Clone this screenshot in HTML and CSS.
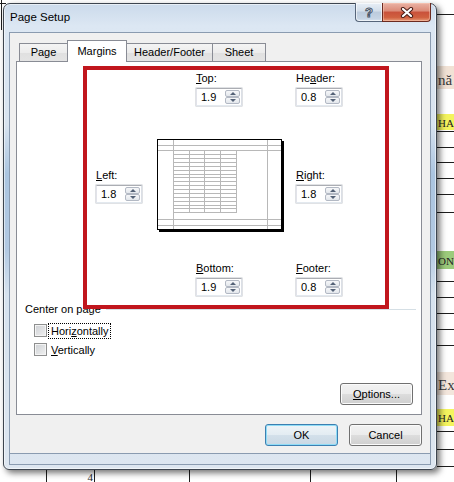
FILE: index.html
```html
<!DOCTYPE html>
<html lang="en">
<head>
  <meta charset="UTF-8" />
  <title>Page Setup</title>
  <link rel="stylesheet" href="styles.css">
</head>
<body>

<!-- worksheet behind the dialog -->
<svg class="sheet" width="454" height="482" viewBox="0 0 454 482">
  <rect x="437" y="66" width="17" height="23" fill="#f1e2d5"/>
  <rect x="437" y="114" width="17" height="16" fill="#f4f45e"/>
  <rect x="437" y="251" width="17" height="18" fill="#9ccb7c"/>
  <rect x="437" y="372" width="17" height="23" fill="#f3e6dc"/>
  <rect x="437" y="409" width="17" height="17" fill="#f4f45e"/>
  <g stroke="#1e1e1e" stroke-width="1" fill="none">
    <path d="M0 3.5H6 M1.5 0V30 M437 14.5H454"/>
    <path d="M437 131.5H454 M437 147.5H454 M437 162.5H454 M437 178.5H454 M437 194.5H454 M437 212.5H454"/>
    <path d="M437 281.5H454 M437 297.5H454 M437 313.5H454 M437 329.5H454 M437 345.5H454"/>
    <path d="M437 431.5H454 M437 449.5H454 M437 466.5H454"/>
    <path d="M46.5 466V482 M94.5 466V482 M189.5 466V482 M310.5 466V482 M396.5 466V482"/>
  </g>
  <text class="cell big" x="438" y="85">nă</text>
  <text class="cell" x="438" y="127">HA</text>
  <text class="cell" x="438" y="265">ON</text>
  <text class="cell big" x="438" y="390">Ex</text>
  <text class="cell" x="438" y="422">HA</text>
  <text class="cell" x="93" y="481" text-anchor="end">4</text>
</svg>

<div class="window">
  <div class="titlebar">
    <span class="title">Page Setup</span>
    <div class="caption-btns">
      <div class="cap-btn help">?</div>
      <div class="cap-btn close">
        <svg width="14" height="11" viewBox="0 0 14 11">
          <path d="M3 2L11 9M11 2L3 9" stroke="#4a1d16" stroke-width="4.2" stroke-linecap="round"/>
          <path d="M3 2L11 9M11 2L3 9" stroke="#fff" stroke-width="2.2" stroke-linecap="round"/>
        </svg>
      </div>
    </div>
  </div>

  <div class="client">
    <div class="tabs">
      <div class="tab tab-page">Page</div>
      <div class="tab tab-margins selected">Margins</div>
      <div class="tab tab-hf">Header/Footer</div>
      <div class="tab tab-sheet">Sheet</div>
    </div>

    <div class="panel">
      <div class="margins">
        <div class="field f-top">
          <label><u>T</u>op:</label>
          <div class="spin-box"><span class="value">1.9</span><span class="spinner"><i class="up"></i><i class="down"></i></span></div>
        </div>
        <div class="field f-header">
          <label>He<u>a</u>der:</label>
          <div class="spin-box"><span class="value">0.8</span><span class="spinner"><i class="up"></i><i class="down"></i></span></div>
        </div>
        <div class="field f-left">
          <label><u>L</u>eft:</label>
          <div class="spin-box"><span class="value">1.8</span><span class="spinner"><i class="up"></i><i class="down"></i></span></div>
        </div>

        <svg class="preview" width="127" height="93" viewBox="0 0 127 93">
          <rect x="2" y="2" width="125" height="91" fill="#000"/>
          <rect x="0.5" y="0.5" width="124" height="90" fill="#fff" stroke="#000"/>
          <g stroke="#b8b8b8" stroke-width="1" fill="none">
            <path d="M1 6.5H124M1 11.5H124M1 80.5H124M1 86.5H124M16.5 1V90M110.5 1V90"/>
            <path d="M32.5 11V74M47.5 11V74M63.5 11V74M79.5 11V74"/>
            <path d="M16 15.5H80M16 19.5H80M16 23.5H80M16 27.5H80M16 31.5H80M16 35.5H80M16 38.5H80M16 42.5H80M16 46.5H80M16 50.5H80M16 54.5H80M16 58.5H80M16 62.5H80M16 66.5H80M16 69.5H80M16 73.5H80"/>
          </g>
        </svg>

        <div class="field f-right">
          <label><u>R</u>ight:</label>
          <div class="spin-box"><span class="value">1.8</span><span class="spinner"><i class="up"></i><i class="down"></i></span></div>
        </div>
        <div class="field f-bottom">
          <label><u>B</u>ottom:</label>
          <div class="spin-box"><span class="value">1.9</span><span class="spinner"><i class="up"></i><i class="down"></i></span></div>
        </div>
        <div class="field f-footer">
          <label><u>F</u>ooter:</label>
          <div class="spin-box"><span class="value">0.8</span><span class="spinner"><i class="up"></i><i class="down"></i></span></div>
        </div>
      </div>

      <div class="center-group">
        <div class="group-title">Center on page</div>
        <div class="check first"><span class="box"></span><span class="text focus">Hori<u>z</u>ontally</span></div>
        <div class="check"><span class="box"></span><span class="text"><u>V</u>ertically</span></div>
      </div>

      <div class="panel-footer">
        <button class="btn"><u>O</u>ptions...</button>
      </div>

      <!-- red annotation drawn over the dialog -->
      <div class="mark"></div>
    </div>

    <div class="dialog-buttons">
      <button class="btn default">OK</button>
      <button class="btn">Cancel</button>
    </div>
  </div>

  <div class="frame-bottom"></div>
</div>

</body>
</html>
```

FILE: styles.css
```css
/* Reset and base styles */
* {
  box-sizing: border-box;
  margin: 0;
  padding: 0;
}

body {
  position: relative;
  width: 454px;
  height: 482px;
  overflow: hidden;
  background: #fff;
  font-family: "Liberation Sans", Arial, sans-serif;
  font-size: 11px;
  color: #000;
}

u {
  text-decoration: underline;
  text-underline-offset: 1px;
}

/* Worksheet in the background */
.sheet {
  position: absolute;
  left: 0;
  top: 0;
}

.sheet .cell {
  font-family: "Liberation Serif", "Times New Roman", serif;
  font-size: 11px;
  fill: #222;
}

.sheet .big {
  font-size: 15px;
  fill: #3a3a3a;
}

/* Window frame */
.window {
  position: absolute;
  left: 3px;
  top: 3px;
  width: 434px;
  height: 467px;
  display: flex;
  flex-direction: column;
  padding: 0 5px 4px;
  border: 1px solid #3d454f;
  border-radius: 7px 7px 6px 6px;
  background: linear-gradient(to bottom,
    #cbdaeb 0, #dce7f3 22px, #d8e3ef 120px, #abc5e0 170px,
    #b2c9e2 245px, #d6e2ee 290px, #dde6f0 100%);
  box-shadow: inset 0 0 0 1px rgba(255,255,255,0.55), 3px 3px 6px rgba(0,0,0,0.55);
}

.titlebar {
  height: 28px;
  display: flex;
  align-items: flex-start;
}

.title {
  padding: 6px 0 0 1px;
  font-size: 11.5px;
  line-height: 14px;
  color: #000;
}

.caption-btns {
  display: flex;
  margin-left: auto;
  margin-top: -1px;
}

.cap-btn {
  height: 19px;
  display: flex;
  align-items: center;
  justify-content: center;
  border: 1px solid #56657a;
  border-top: none;
}

.help {
  width: 27px;
  border-right: none;
  border-radius: 0 0 0 4px;
  background: linear-gradient(to bottom, #e7eef6, #d3deea 45%, #bccbdc 50%, #c6d4e4 85%, #d8e3ef);
  box-shadow: inset 0 0 0 1px rgba(255,255,255,0.6);
  font-weight: bold;
  font-size: 13px;
  color: #fff;
  -webkit-text-stroke: 1px #4a5668;
}

.close {
  width: 49px;
  border-color: #6b2a20;
  border-radius: 0 0 4px 0;
  background: linear-gradient(to bottom, #eab3a5, #db8a77 45%, #c9513b 50%, #d0603f 80%, #e79a78);
  box-shadow: inset 0 0 0 1px rgba(255,210,190,0.45);
}

/* Client area */
.client {
  height: 422px;
  display: flex;
  flex-direction: column;
  padding: 7px 8px 0 6px;
  background: #f0f0f0;
  border: 1px solid #8a9bb0;
}

.frame-bottom {
  height: 11px;
  border: 1px solid #8a9bb0;
  border-top: none;
}

/* Tabs */
.tabs {
  position: relative;
  z-index: 2;
  height: 21px;
  display: flex;
  align-items: flex-end;
  padding-left: 3px;
}

.tab {
  height: 18px;
  border: 1px solid #898c95;
  border-bottom: none;
  background: linear-gradient(to bottom, #f4f4f4, #ececec 50%, #e0e0e0 51%, #e4e4e4);
  text-align: center;
  line-height: 16px;
}

.tab-page { width: 49px; }
.tab-margins { width: 60px; margin-left: -1px; }
.tab-hf { width: 87px; margin-left: -1px; }
.tab-sheet { width: 54px; margin-left: -1px; }

.tab.selected {
  position: relative;
  z-index: 1;
  height: 22px;
  margin-bottom: -1px;
  padding-top: 2px;
  background: #fff;
}

.panel {
  position: relative;
  height: 354px;
  display: flex;
  flex-direction: column;
  background: #fff;
  border: 1px solid #898c95;
}

/* Margin fields */
.margins {
  display: grid;
  grid-template-columns: 61px 127px 58px;
  grid-template-rows: 35px 33px 93px 29px 35px;
  margin: 9px 0 0 79px;
}

.f-top { grid-area: 1 / 2; margin-left: 39px; }
.f-header { grid-area: 1 / 3; justify-self: end; }
.f-left { grid-area: 3 / 1; align-self: center; }
.preview { grid-area: 3 / 2; }
.f-right { grid-area: 3 / 3; justify-self: end; align-self: center; }
.f-bottom { grid-area: 5 / 2; margin-left: 39px; }
.f-footer { grid-area: 5 / 3; justify-self: end; }

.field label {
  display: block;
  line-height: 14px;
  margin-bottom: 3px;
}

.spin-box {
  width: 46px;
  height: 18px;
  display: flex;
  background: #fff;
  border: 1px solid #abadb3;
  border-color: #abadb3 #dbdfe6 #e3e9ef #e2e3ea;
  box-shadow: 0 0 0 0.5px #c2c5cb;
}

.spin-box .value {
  flex: 1;
  padding-left: 4px;
  line-height: 16px;
}

.spinner {
  width: 15px;
  display: flex;
  flex-direction: column;
  margin: 1px 1px 1px 0;
}

.spinner i {
  flex: 1;
  display: flex;
  align-items: center;
  justify-content: center;
  border: 1px solid #b3b9c4;
  border-radius: 2px;
  background: linear-gradient(to bottom, #f6f7f9, #e3e7ec);
}

.spinner i::before {
  content: "";
  border-left: 3px solid transparent;
  border-right: 3px solid transparent;
}

.spinner .up::before { border-bottom: 3px solid #536176; }
.spinner .down::before { border-top: 3px solid #536176; }

/* Center on page */
.center-group {
  margin: 6px 5px 0 8px;
}

.group-title {
  display: flex;
  align-items: center;
  line-height: 14px;
}

.group-title::after {
  content: "";
  flex: 1;
  height: 1px;
  margin-left: 5px;
  background: #d5dfe5;
}

.check {
  height: 19px;
  display: flex;
  align-items: center;
  margin-left: 9px;
}

.check.first { margin-top: 5px; }

.check .box {
  width: 13px;
  height: 13px;
  border: 1px solid #8e8f8f;
  background: linear-gradient(135deg, #cdd0d4, #f1f1f1);
  box-shadow: inset 0 0 0 1px #f4f4f4;
}

.check .text {
  margin-left: 2px;
  padding: 0 2px;
  line-height: 14px;
}

.check .text.focus {
  outline: 1px dotted #000;
}

.panel-footer {
  margin-top: auto;
  display: flex;
  justify-content: flex-end;
  padding: 0 8px 9px 0;
}

/* Buttons */
.btn {
  width: 73px;
  height: 22px;
  font: inherit;
  color: #000;
  border: 1px solid #707070;
  border-radius: 3px;
  background: linear-gradient(to bottom, #f2f2f2, #ebebeb 50%, #dddddd 51%, #cfcfcf);
  box-shadow: inset 0 0 0 1px #fbfbfb;
}

.btn.default {
  border-color: #3c7fb1;
  background: linear-gradient(to bottom, #eef4f8, #e3ecf2 50%, #d3e0ea 51%, #c9d8e4);
  box-shadow: inset 0 0 0 1px #8fdcf6;
}

.dialog-buttons {
  display: flex;
  justify-content: flex-end;
  gap: 11px;
  margin-top: 9px;
}

/* Red annotation on top */
.mark {
  position: absolute;
  left: 66px;
  top: 4px;
  width: 306px;
  height: 243px;
  border: 4px solid #c1161d;
  z-index: 3;
}
```
